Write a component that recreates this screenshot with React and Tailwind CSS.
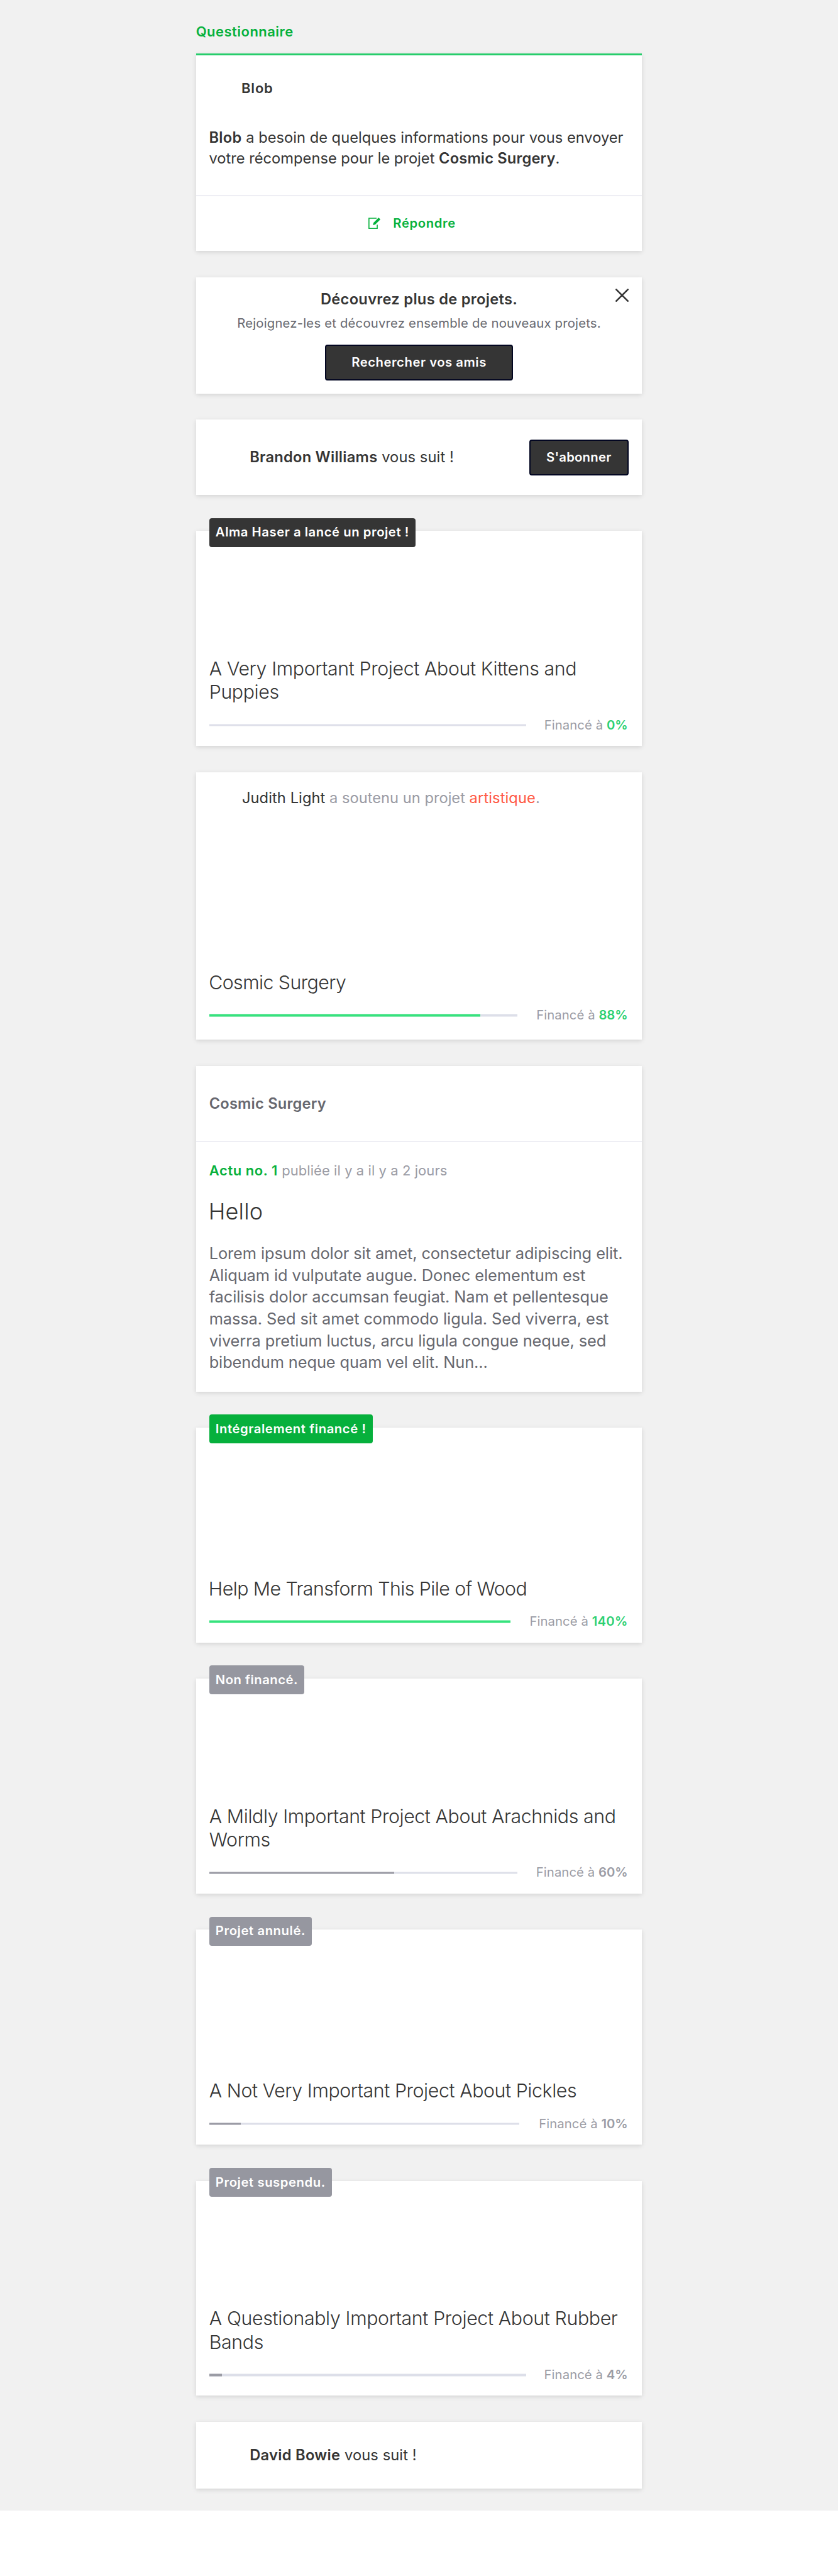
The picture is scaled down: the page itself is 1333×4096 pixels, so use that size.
import React from "react";

const SHADOW = "shadow-[0_2px_7px_rgba(0,0,0,0.13)]";

function Card({ className = "", children }) {
  return <section className={`bg-white w-full shrink-0 ${SHADOW} ${className}`}>{children}</section>;
}

function EditIcon() {
  return (
    <svg viewBox="0 0 22 21" className="w-[19.1px] h-[18.2px] shrink-0" fill="none">
      <path d="M15 1.2H1V20H16.2V13" stroke="#06b13c" strokeWidth="1.8" />
      <path d="M18.7 0L22 3.3L12.6 12.6L8.3 13.8L9.4 9.4Z" fill="#06b13c" />
    </svg>
  );
}

function CloseIcon() {
  return (
    <svg viewBox="0 0 24 24" className="w-[21px] h-[21px]" fill="none">
      <path d="M1.5 1.5L22.5 22.5M22.5 1.5L1.5 22.5" stroke="#353535" strokeWidth="3" strokeLinecap="round" />
    </svg>
  );
}

function DarkButton({ className = "", children }) {
  return (
    <button
      className={`flex h-[57.3px] items-center justify-center rounded-[4px] border-2 border-[#020621] bg-[#353535] text-[20.3px] font-semibold text-white ${className}`}
    >
      {children}
    </button>
  );
}

function Funding({ barWidth, percent, fill, pctColor, pctClass = "tracking-[-0.004em]" }) {
  return (
    <div className="flex h-[24px] items-center justify-between pl-[20.8px] pr-[22px]">
      <div className={`h-[3.5px] translate-y-[0.5px] bg-[#dddfe9] ${barWidth}`}>
        <div className={`h-full ${fill}`} style={{ width: `${Math.min(percent, 100)}%` }} />
      </div>
      <p className="whitespace-nowrap text-[20.3px] leading-[24px] tracking-[0.004em] text-[#9b9ca5]">
        Financé à <span className={`font-semibold ${pctClass} ${pctColor}`}>{percent}%</span>
      </p>
    </div>
  );
}

function ProjectCard({ badge, badgeClass, title, titleClass, titlePad = "pl-[20.3px]", ...funding }) {
  return (
    <Card className="relative mt-[57.3px] flex h-[341.9px] flex-col justify-end pb-[21.7px]">
      <div
        className={`absolute left-[20.8px] top-[-20.8px] flex h-[46px] items-center whitespace-nowrap rounded-[4px] pl-[9.6px] text-[20.3px] font-semibold text-white ${badgeClass}`}
      >
        {badge}
      </div>
      <h2 className={`mb-[21px] text-[30.3px] font-light leading-[37.2px] text-[#353535] ${titlePad} ${titleClass}`}>
        {title.map((line) => (
          <span key={line} className="block whitespace-nowrap">{line}</span>
        ))}
      </h2>
      <Funding {...funding} />
    </Card>
  );
}

const LOREM = [
  "Lorem ipsum dolor sit amet, consectetur adipiscing elit.",
  "Aliquam id vulputate augue. Donec elementum est",
  "facilisis dolor accumsan feugiat. Nam et pellentesque",
  "massa. Sed sit amet commodo ligula. Sed viverra, est",
  "viverra pretium luctus, arcu ligula congue neque, sed",
  "bibendum neque quam vel elit. Nun...",
];

export default function App() {
  return (
    <div className="min-h-[4096px] w-full bg-white font-[Inter,sans-serif] antialiased">
      <div className="flex h-[3991.9px] w-full justify-center bg-[#f1f1f1]">
        <main className="flex w-[708.1px] flex-col pt-[38.4px]">
          <h1 className="ml-[-0.8px] mb-[22.6px] text-[22px] font-semibold leading-[24px] tracking-[0.021em] text-[#06b13c]">
            Questionnaire
          </h1>

          <Card className="h-[314.2px]">
            <div className="h-[3.5px] bg-[#26cd6b]" />
            <p className="pl-[71.6px] pt-[39.9px] text-[22px] font-semibold leading-[24px] tracking-[0.036em] text-[#353535]">Blob</p>
            <p className="mt-[49.4px] whitespace-nowrap pl-[20px] text-[23.7px] leading-[33.2px] text-[#353535]">
              <b className="font-semibold tracking-[0.012em]">Blob</b> a besoin de quelques informations pour vous envoyer
              <br />
              votre récompense pour le projet <b className="font-semibold tracking-[0.006em]">Cosmic Surgery</b>.
            </p>
            <div className="mt-[42.3px] h-[2px] bg-[#eeeef4]" />
            <div className="flex items-center gap-[20.4px] pl-[273.4px] pt-[30.6px]">
              <EditIcon />
              <span className="text-[20.3px] font-semibold leading-[24px] tracking-[0.03em] text-[#06b13c]">Répondre</span>
            </div>
          </Card>

          <Card className="relative mt-[41.6px] flex h-[184.8px] flex-col items-center pt-[21.7px]">
            <button className="absolute right-[20.8px] top-[18.3px]">
              <CloseIcon />
            </button>
            <h2 className="text-[23.7px] font-semibold leading-[28px] tracking-[0.012em] text-[#353535]">
              Découvrez plus de projets.
            </h2>
            <p className="mt-[11.7px] text-[20.3px] leading-[24px] tracking-[0.01em] text-[#67686f]">
              Rejoignez-les et découvrez ensemble de nouveaux projets.
            </p>
            <DarkButton className="mt-[21.4px] w-[298.5px] tracking-[0.026em]">Rechercher vos amis</DarkButton>
          </Card>

          <Card className="mt-[41.7px] flex h-[119.8px] items-center justify-between pl-[84.7px] pr-[21px]">
            <p className="whitespace-nowrap text-[23.7px] leading-[28px] tracking-[0.004em] text-[#353535]">
              <b className="font-semibold tracking-[0.01em]">Brandon Williams</b> vous suit !
            </p>
            <DarkButton className="w-[157.7px] tracking-[0.012em]">S'abonner</DarkButton>
          </Card>

          <ProjectCard
            badge="Alma Haser a lancé un projet !"
            badgeClass="w-[328px] bg-[#353535] tracking-[0.0265em]"
            title={["A Very Important Project About Kittens and", "Puppies"]}
            titleClass="tracking-[-0.0125em]"
            barWidth="w-[503.3px]"
            percent={0}
            fill="bg-[#36e37d]"
            pctColor="text-[#2cd072]"
          />

          <Card className="mt-[41.7px] flex h-[425.2px] flex-col justify-between pb-[26.9px] pt-[26.8px]">
            <p className="pl-[72.5px] text-[23.7px] leading-[28px] text-[#9b9ca5]">
              <span className="tracking-[0.003em] text-[#353535]">Judith Light</span> a soutenu un projet{" "}
              <span className="tracking-[0.004em] text-[#ff5a45]">artistique</span>.
            </p>
            <div>
              <h2 className="mb-[21px] pl-[19.8px] text-[30.3px] font-light leading-[37.2px] tracking-[-0.019em] text-[#353535]">
                Cosmic Surgery
              </h2>
              <Funding barWidth="w-[489.5px]" percent={88} fill="bg-[#36e37d]" pctColor="text-[#2cd072]" />
            </div>
          </Card>

          <Card className="mt-[41.6px] h-[518px]">
            <h2 className="pl-[20.2px] pt-[46px] text-[23.7px] font-semibold leading-[28px] tracking-[0.008em] text-[#67686f]">
              Cosmic Surgery
            </h2>
            <div className="mt-[45.6px] h-[2px] bg-[#eeeef4]" />
            <p className="mt-[31.8px] pl-[20.4px] text-[22px] leading-[26px] tracking-[0.003em] text-[#9b9ca5]">
              <b className="font-semibold tracking-[0.025em] text-[#06b13c]">Actu no. 1</b> publiée il y a il y a 2 jours
            </p>
            <h3 className="mt-[29.8px] pl-[19.2px] text-[36px] font-light leading-[44px] tracking-[0.006em] text-[#353535]">Hello</h3>
            <p className="mt-[28px] whitespace-nowrap pl-[20.2px] text-[25.4px] leading-[34.65px] tracking-[-0.0035em] text-[#67686f]">
              {LOREM.map((line) => (
                <span key={line} className="block">{line}</span>
              ))}
            </p>
          </Card>

          <ProjectCard
            badge="Intégralement financé !"
            badgeClass="w-[259.5px] bg-[#06b03c] tracking-[0.028em]"
            title={["Help Me Transform This Pile of Wood"]}
            titleClass="tracking-[-0.0185em]"
            titlePad="pl-[19.4px]"
            barWidth="w-[479px]"
            percent={140}
            fill="bg-[#36e37d]"
            pctColor="text-[#2cd072]"
            pctClass="tracking-[0.012em]"
          />
          <ProjectCard
            badge="Non financé."
            badgeClass="w-[150.8px] bg-[#9697a0] tracking-[0.024em]"
            title={["A Mildly Important Project About Arachnids and", "Worms"]}
            titleClass="tracking-[-0.0135em]"
            barWidth="w-[489.5px]"
            percent={60}
            fill="bg-[#9b9ca5]"
            pctColor="text-[#9b9ca5]"
          />
          <ProjectCard
            badge="Projet annulé."
            badgeClass="w-[163.1px] bg-[#9697a0] tracking-[0.028em]"
            title={["A Not Very Important Project About Pickles"]}
            titleClass="tracking-[-0.0135em]"
            barWidth="w-[493px]"
            percent={10}
            fill="bg-[#9b9ca5]"
            pctColor="text-[#9b9ca5]"
          />
          <ProjectCard
            badge="Projet suspendu."
            badgeClass="w-[195px] bg-[#9697a0] tracking-[0.028em]"
            title={["A Questionably Important Project About Rubber", "Bands"]}
            titleClass="tracking-[-0.012em]"
            barWidth="w-[504.2px]"
            percent={4}
            fill="bg-[#9b9ca5]"
            pctColor="text-[#9b9ca5]"
          />

          <Card className="mt-[41.7px] flex h-[105.9px] items-center pl-[84.7px]">
            <p className="whitespace-nowrap text-[23.7px] leading-[28px] tracking-[0.004em] text-[#353535]">
              <b className="font-semibold tracking-[0.012em]">David Bowie</b> vous suit !
            </p>
          </Card>
        </main>
      </div>
    </div>
  );
}
